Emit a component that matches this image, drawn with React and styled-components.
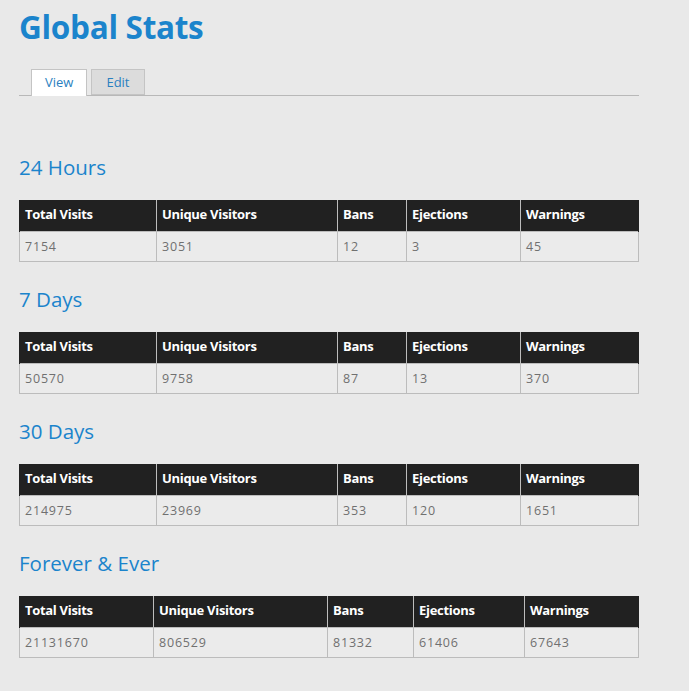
import React from 'react'
import styled, { createGlobalStyle } from 'styled-components'

const GlobalStyle = createGlobalStyle`
  html, body {
    margin: 0;
    padding: 0;
    background: #e9e9e9;
  }
  body {
    font-family: 'Open Sans', 'DejaVu Sans', sans-serif;
  }
`

const Page = styled.div`
  width: 620px;
  padding: 5px 0 30px 19px;
`

const Title = styled.h1`
  margin: 0;
  font-size: 31.5px;
  line-height: 44px;
  font-weight: 700;
  color: #1b84cc;
  letter-spacing: -0.3px;
`

const Tabs = styled.div`
  display: flex;
  gap: 4px;
  margin-top: 20px;
  padding-left: 12px;
  border-bottom: 1px solid #b8b8b8;
  margin-bottom: 57px;
`

const Tab = styled.span`
  display: block;
  box-sizing: border-box;
  height: ${p => (p.active ? '27px' : '26px')};
  margin-bottom: ${p => (p.active ? '-1px' : '0')};
  padding: 0 ${p => (p.active ? '13px' : '14px')};
  font-size: 13px;
  line-height: 24px;
  color: #2a7fc0;
  background: ${p => (p.active ? '#ffffff' : '#dcdcdc')};
  border: 1px solid #c4c4c4;
  border-bottom: ${p => (p.active ? 'none' : '1px solid #c4c4c4')};
`

const Section = styled.section`
  margin-bottom: 23px;
`

const Heading = styled.h2`
  margin: 0 0 19px;
  font-size: 20.5px;
  line-height: 28px;
  font-weight: 400;
  color: #1b84cc;
`

const Table = styled.table`
  width: 619px;
  border-collapse: collapse;
  table-layout: fixed;
`

const Th = styled.th`
  background: #212121;
  color: #ffffff;
  text-align: left;
  font-size: 13px;
  font-weight: 700;
  letter-spacing: -0.3px;
  height: 28px;
  padding: 0 5px 3px;
  border: 1px solid #bdbdbd;
  border-top: none;
  border-bottom: none;
  &:first-child { border-left-color: #212121; }
  &:last-child { border-right-color: #212121; }
`

const Td = styled.td`
  color: #707070;
  font-size: 12.5px;
  letter-spacing: 0.8px;
  height: 29px;
  padding: 0 5px;
  border: 1px solid #bcbcbc;
  background: #ebebeb;
`

const headers = ['Total Visits', 'Unique Visitors', 'Bans', 'Ejections', 'Warnings']

const sections = [
  { title: '24 Hours', values: ['7154', '3051', '12', '3', '45'], widths: [137, 181, 69, 114, 118] },
  { title: '7 Days', values: ['50570', '9758', '87', '13', '370'], widths: [137, 181, 69, 114, 118] },
  { title: '30 Days', values: ['214975', '23969', '353', '120', '1651'], widths: [137, 181, 69, 114, 118] },
  { title: 'Forever & Ever', values: ['21131670', '806529', '81332', '61406', '67643'], widths: [134, 174, 86, 111, 114] },
]

export default function App() {
  return (
    <>
      <GlobalStyle />
      <Page>
        <Title>Global Stats</Title>
        <Tabs>
          <Tab active>View</Tab>
          <Tab>Edit</Tab>
        </Tabs>
        {sections.map(s => (
          <Section key={s.title}>
            <Heading>{s.title}</Heading>
            <Table>
              <colgroup>
                {s.widths.map((w, i) => <col key={i} style={{ width: w }} />)}
              </colgroup>
              <thead>
                <tr>
                  {headers.map(h => <Th key={h}>{h}</Th>)}
                </tr>
              </thead>
              <tbody>
                <tr>
                  {s.values.map((v, i) => <Td key={i}>{v}</Td>)}
                </tr>
              </tbody>
            </Table>
          </Section>
        ))}
      </Page>
    </>
  )
}
